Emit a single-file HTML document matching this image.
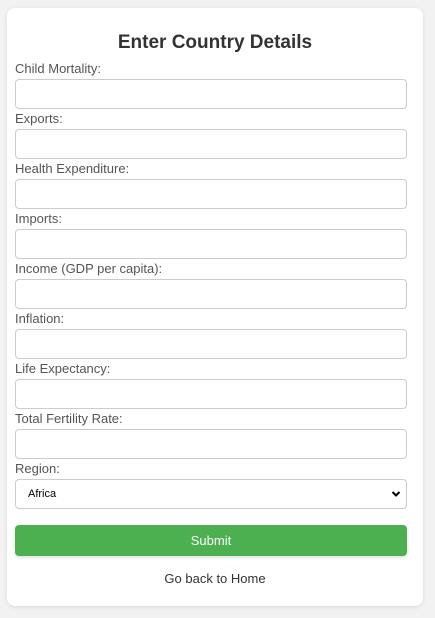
<!DOCTYPE html>
<html><head><style>
body{margin:0;background:#f2f2f2;font-family:"Liberation Sans",Arial,sans-serif;}
.card{position:absolute;left:7px;top:8px;width:416px;height:598px;background:#fff;border-radius:8px;box-shadow:0 1px 4px rgba(0,0,0,0.1);}
h2{position:absolute;left:0;right:0;top:24px;margin:0;text-align:center;font-size:19px;line-height:22px;color:#333;font-weight:bold;}
.form{position:absolute;left:8px;top:51px;width:392px;}
label{display:block;font-size:13px;line-height:20px;height:20px;color:#555;}
.in{box-sizing:border-box;height:30px;border:1px solid #ccc;border-radius:4px;background:#fff;}
.sel{box-sizing:border-box;height:30px;border:1px solid #ccc;border-radius:4px;position:relative;font-size:11px;color:#000;line-height:28px;padding-left:12px;}
.btn{margin-top:16px;height:31px;background:#4caf50;border-radius:4px;color:#fff;text-align:center;line-height:31px;font-size:13px;box-shadow:0 2px 3px rgba(0,0,0,0.12);}
.home{text-align:center;margin-top:14px;font-size:13px;color:#333;line-height:18px;padding-left:8px;}
</style></head><body>
<div class="card">
<h2>Enter Country Details</h2>
<div class="form">
<label>Child Mortality:</label><div class="in"></div>
<label>Exports:</label><div class="in"></div>
<label>Health Expenditure:</label><div class="in"></div>
<label>Imports:</label><div class="in"></div>
<label>Income (GDP per capita):</label><div class="in"></div>
<label>Inflation:</label><div class="in"></div>
<label>Life Expectancy:</label><div class="in"></div>
<label>Total Fertility Rate:</label><div class="in"></div>
<label>Region:</label>
<div class="sel">Africa<svg style="position:absolute;right:5px;top:10px" width="10" height="8" viewBox="0 0 10 8"><path d="M1.5 2 L5 5.5 L8.5 2" fill="none" stroke="#000" stroke-width="2"/></svg></div>
<div class="btn">Submit</div>
<div class="home">Go back to Home</div>
</div>
</div>
</body></html>
